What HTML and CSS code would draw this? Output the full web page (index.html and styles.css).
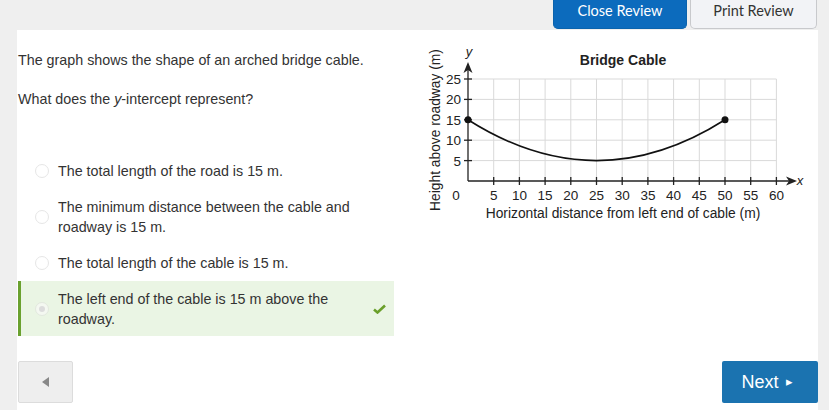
FILE: index.html
```html
<!DOCTYPE html>
<html>
<head>
<meta charset="utf-8">
<link rel="stylesheet" href="styles.css">
</head>
<body>
<div class="topbar">
  <button class="btn-close">Close Review</button>
  <button class="btn-print">Print Review</button>
</div>
<main class="panel">
  <div class="content">
    <section class="question">
      <p class="q1">The graph shows the shape of an arched bridge cable.</p>
      <p class="q2">What does the <i>y</i>-intercept represent?</p>
      <ul class="options">
        <li class="option"><span class="radio"></span><span class="otext">The total length of the road is 15 m.</span></li>
        <li class="option"><span class="radio"></span><span class="otext">The minimum distance between the cable and roadway is 15 m.</span></li>
        <li class="option"><span class="radio"></span><span class="otext">The total length of the cable is 15 m.</span></li>
        <li class="option selected"><span class="radio"><span class="dot"></span></span><span class="otext">The left end of the cable is 15 m above the roadway.</span><span class="check"><svg width="13" height="10" viewBox="0 0 13 10"><path d="M1 5.5 L4.5 8.5 L12 1.5" fill="none" stroke="#6a9f2a" stroke-width="2.6"/></svg></span></li>
      </ul>
    </section>
    <figure class="graph">
      <svg width="390" height="185" viewBox="420 40 390 185" class="chart">
        <g stroke="#d9d9d9" stroke-width="1">
          <line x1="493.7" y1="79" x2="493.7" y2="181"/>
          <line x1="519.4" y1="79" x2="519.4" y2="181"/>
          <line x1="545.1" y1="79" x2="545.1" y2="181"/>
          <line x1="570.8" y1="79" x2="570.8" y2="181"/>
          <line x1="596.5" y1="79" x2="596.5" y2="181"/>
          <line x1="622.2" y1="79" x2="622.2" y2="181"/>
          <line x1="647.9" y1="79" x2="647.9" y2="181"/>
          <line x1="673.6" y1="79" x2="673.6" y2="181"/>
          <line x1="699.3" y1="79" x2="699.3" y2="181"/>
          <line x1="725" y1="79" x2="725" y2="181"/>
          <line x1="750.7" y1="79" x2="750.7" y2="181"/>
          <line x1="776.4" y1="79" x2="776.4" y2="181"/>
          <line x1="468" y1="79" x2="776.4" y2="79"/>
          <line x1="468" y1="99.4" x2="776.4" y2="99.4"/>
          <line x1="468" y1="119.8" x2="776.4" y2="119.8"/>
          <line x1="468" y1="140.2" x2="776.4" y2="140.2"/>
          <line x1="468" y1="160.6" x2="776.4" y2="160.6"/>
        </g>
        <g stroke="#222" stroke-width="1.3">
          <line x1="468" y1="181" x2="789" y2="181"/>
          <line x1="468" y1="181" x2="468" y2="68"/>
          <line x1="493.7" y1="177" x2="493.7" y2="185"/>
          <line x1="519.4" y1="177" x2="519.4" y2="185"/>
          <line x1="545.1" y1="177" x2="545.1" y2="185"/>
          <line x1="570.8" y1="177" x2="570.8" y2="185"/>
          <line x1="596.5" y1="177" x2="596.5" y2="185"/>
          <line x1="622.2" y1="177" x2="622.2" y2="185"/>
          <line x1="647.9" y1="177" x2="647.9" y2="185"/>
          <line x1="673.6" y1="177" x2="673.6" y2="185"/>
          <line x1="699.3" y1="177" x2="699.3" y2="185"/>
          <line x1="725" y1="177" x2="725" y2="185"/>
          <line x1="750.7" y1="177" x2="750.7" y2="185"/>
          <line x1="776.4" y1="177" x2="776.4" y2="185"/>
          <line x1="464" y1="79" x2="472" y2="79"/>
          <line x1="464" y1="99.4" x2="472" y2="99.4"/>
          <line x1="464" y1="119.8" x2="472" y2="119.8"/>
          <line x1="464" y1="140.2" x2="472" y2="140.2"/>
          <line x1="464" y1="160.6" x2="472" y2="160.6"/>
        </g>
        <path d="M468 62 L472.5 73 L468 70 L463.5 73 Z" fill="#222"/>
        <path d="M797 181 L786 176.5 L789 181 L786 185.5 Z" fill="#222"/>
        <path d="M468 119.8 Q596.5 201.4 725 119.8" fill="none" stroke="#111" stroke-width="1.6"/>
        <circle cx="468" cy="119.8" r="3.5" fill="#111"/>
        <circle cx="725" cy="119.8" r="3.5" fill="#111"/>
        <text x="623" y="65" class="title" text-anchor="middle">Bridge Cable</text>
        <text x="469" y="56" class="var" text-anchor="middle">y</text>
        <text x="800" y="185" class="var" text-anchor="middle">x</text>
        <g class="tick" text-anchor="end">
          <text x="461" y="84">25</text>
          <text x="461" y="104.4">20</text>
          <text x="461" y="124.8">15</text>
          <text x="461" y="145.2">10</text>
          <text x="461" y="165.6">5</text>
        </g>
        <g class="tick" text-anchor="middle">
          <text x="456" y="200">0</text>
          <text x="493.7" y="200">5</text>
          <text x="519.4" y="200">10</text>
          <text x="545.1" y="200">15</text>
          <text x="570.8" y="200">20</text>
          <text x="596.5" y="200">25</text>
          <text x="622.2" y="200">30</text>
          <text x="647.9" y="200">35</text>
          <text x="673.6" y="200">40</text>
          <text x="699.3" y="200">45</text>
          <text x="725" y="200">50</text>
          <text x="750.7" y="200">55</text>
          <text x="776.4" y="200">60</text>
        </g>
        <text x="623" y="218" class="axis" text-anchor="middle">Horizontal distance from left end of cable (m)</text>
        <text x="0" y="0" class="axis" text-anchor="middle" transform="translate(440 130) rotate(-90)">Height above roadway (m)</text>
      </svg>
    </figure>
  </div>
  <nav class="nav">
    <button class="btn-back"><svg width="7" height="10" viewBox="0 0 7 10"><path d="M7 0 L0 5 L7 10 Z" fill="#888"/></svg></button>
    <button class="btn-next">Next <span class="tri">&#9656;</span></button>
  </nav>
</main>
</body>
</html>
```
FILE: styles.css
```css
html, body {
  margin: 0;
  padding: 0;
}
body {
  background: #efefef;
  width: 829px;
  height: 410px;
  overflow: hidden;
  font-family: "Liberation Sans", Arial, sans-serif;
  color: #333;
}
.topbar {
  height: 30px;
  display: flex;
  justify-content: flex-end;
  align-items: flex-start;
  gap: 3px;
  padding-right: 12px;
}
.topbar button {
  font-family: Lato, "Liberation Sans", sans-serif;
  font-size: 14.5px;
  height: 29px;
  line-height: 22px;
  padding: 0 0 7px;
  border-radius: 0 0 5px 5px;
  cursor: pointer;
}
.btn-close {
  width: 134px;
  background: #0c6bbd;
  color: #fff;
  border: 1px solid #0a63ad;
  border-top: none;
}
.btn-print {
  width: 127px;
  background: #f2f3f6;
  color: #333;
  border: 1px solid #c8c9cc;
  border-top: none;
}
.panel {
  margin-left: 17px;
  width: 801px;
  height: 380px;
  background: #fff;
  display: flex;
  flex-direction: column;
  padding-left: 1px;
  box-sizing: border-box;
}
.content {
  flex: 1;
  display: flex;
}
.question {
  width: 376px;
  padding-top: 20px;
}
.question p {
  margin: 0;
  font-size: 14.3px;
  line-height: 20px;
}
.q2 {
  margin-top: 19px !important;
}
.options {
  list-style: none;
  margin: 44px 0 0;
  padding: 0;
}
.option {
  display: flex;
  align-items: center;
  padding: 8px 0 8px 17px;
  font-size: 14.3px;
  line-height: 20px;
}
.option.selected {
  background: #eaf5e4;
  border-left: 3px solid #6aa12f;
  padding-left: 14px;
  padding-bottom: 7px;
}
.radio {
  width: 12px;
  height: 12px;
  border: 1px solid #e6e6e6;
  border-radius: 50%;
  flex: none;
  margin-right: 9px;
  background: #fff;
  display: flex;
  align-items: center;
  justify-content: center;
}
.selected .radio {
  background: #f4f8f1;
  border-color: #e2e8de;
}
.dot {
  width: 6px;
  height: 6px;
  border-radius: 50%;
  background: #dcdcdc;
}
.otext {
  flex: 1;
  padding-right: 30px;
}
.selected .otext {
  padding-right: 10px;
}
.check {
  width: 13px;
  margin-right: 8px;
  display: flex;
  align-items: center;
}
.graph {
  margin: 10px 0 0 26px;
}
.chart {
  display: block;
}
.chart text {
  font-family: "Liberation Sans", Arial, sans-serif;
  fill: #222;
}
.chart .title {
  font-size: 14px;
  font-weight: bold;
}
.chart .var {
  font-size: 13px;
  font-style: italic;
}
.chart .tick text {
  font-size: 13.5px;
}
.chart .axis {
  font-size: 13.8px;
}
.nav {
  display: flex;
  justify-content: space-between;
  align-items: flex-end;
  padding-bottom: 7px;
}
.btn-back {
  width: 55px;
  height: 42px;
  background: #eeeeee;
  border: 1px solid #dcdcdc;
  border-radius: 2px;
  display: flex;
  align-items: center;
  justify-content: center;
  padding: 0;
}
.btn-next {
  width: 96px;
  height: 42px;
  background: #1b73b0;
  color: #fff;
  border: none;
  border-radius: 2px;
  font-family: "Liberation Sans", Arial, sans-serif;
  font-size: 18px;
  padding: 0 6px 0 0;
}
.tri {
  font-size: 13px;
  vertical-align: 2px;
  margin-left: 2px;
}
```
